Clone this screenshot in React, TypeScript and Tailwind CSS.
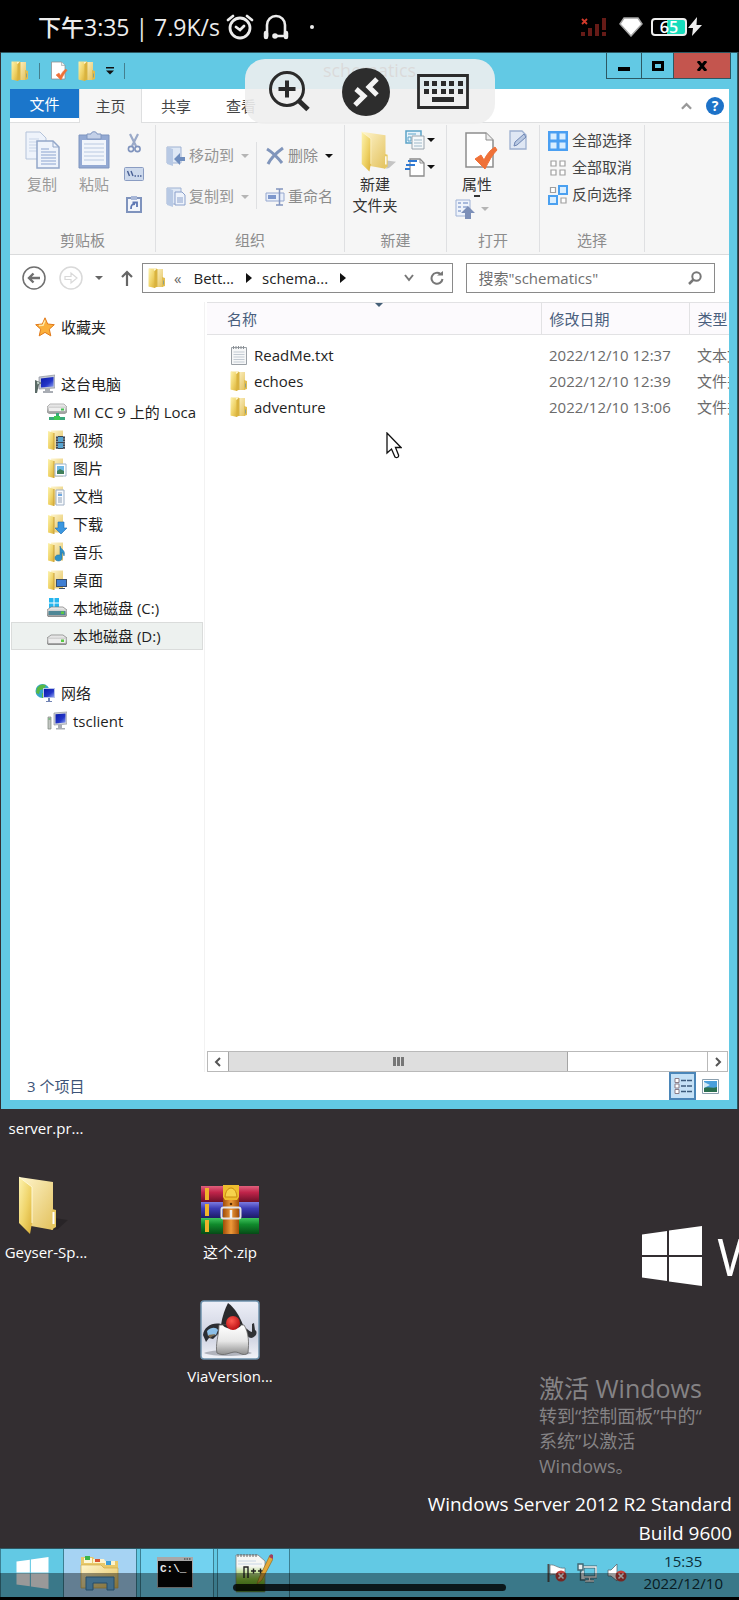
import React from "react";

type P = { className?: string };

/* Shared gradients for the coloured icons */
const Defs = () => (
  <svg className="absolute size-0" aria-hidden="true">
    <defs>
      <linearGradient id="fold" x1="0" y1="0" x2="1" y2="1">
        <stop offset="0" stopColor="#fdf3b0" />
        <stop offset="0.55" stopColor="#efd368" />
        <stop offset="1" stopColor="#d9ae36" />
      </linearGradient>
      <linearGradient id="foldSoft" x1="0" y1="0" x2="1" y2="1">
        <stop offset="0" stopColor="#fff6cf" />
        <stop offset="1" stopColor="#e3c25e" />
      </linearGradient>
      <linearGradient id="drive" x1="0" y1="0" x2="0" y2="1">
        <stop offset="0" stopColor="#f4f4f4" />
        <stop offset="1" stopColor="#9a9a9a" />
      </linearGradient>
      <linearGradient id="screen" x1="0" y1="0" x2="1" y2="1">
        <stop offset="0" stopColor="#0a1aa8" />
        <stop offset="0.6" stopColor="#2436c8" />
        <stop offset="1" stopColor="#8ea2f2" />
      </linearGradient>
      <linearGradient id="bookR" x1="0" y1="0" x2="0" y2="1">
        <stop offset="0" stopColor="#e0607c" />
        <stop offset="0.4" stopColor="#c0244a" />
        <stop offset="1" stopColor="#6c0f28" />
      </linearGradient>
      <linearGradient id="bookB" x1="0" y1="0" x2="0" y2="1">
        <stop offset="0" stopColor="#7c7be0" />
        <stop offset="0.4" stopColor="#3c3cb4" />
        <stop offset="1" stopColor="#1d1c66" />
      </linearGradient>
      <linearGradient id="bookG" x1="0" y1="0" x2="0" y2="1">
        <stop offset="0" stopColor="#3fc45c" />
        <stop offset="0.4" stopColor="#108a2c" />
        <stop offset="1" stopColor="#064a16" />
      </linearGradient>
      <linearGradient id="strap" x1="0" y1="0" x2="1" y2="0">
        <stop offset="0" stopColor="#a04c08" />
        <stop offset="0.5" stopColor="#ee9a3a" />
        <stop offset="1" stopColor="#a04c08" />
      </linearGradient>
      <radialGradient id="nose" cx="0.4" cy="0.35" r="0.7">
        <stop offset="0" stopColor="#ff5a50" />
        <stop offset="1" stopColor="#b80c10" />
      </radialGradient>
      <linearGradient id="belly" x1="0" y1="0" x2="0" y2="1">
        <stop offset="0" stopColor="#ffffff" />
        <stop offset="0.55" stopColor="#e6e6e6" />
        <stop offset="1" stopColor="#8e8e8e" />
      </linearGradient>
      <linearGradient id="card" x1="0" y1="0" x2="0" y2="1">
        <stop offset="0" stopColor="#eef0f8" />
        <stop offset="0.6" stopColor="#cdd1e0" />
        <stop offset="1" stopColor="#f3f4f9" />
      </linearGradient>
      <linearGradient id="npp" x1="0" y1="0" x2="0" y2="1">
        <stop offset="0.3" stopColor="#f7f7f4" />
        <stop offset="0.65" stopColor="#8cc63c" />
        <stop offset="1" stopColor="#3f8a10" />
      </linearGradient>
    </defs>
  </svg>
);

const Folder = ({ className = "" }: P) => (
  <svg viewBox="0 0 18 20" className={`shrink-0 ${className}`} aria-hidden="true">
    <path d="M1 .5h8v18H1z" fill="#f5e08a" />
    <path d="M6 1h9v18H6z" fill="url(#foldSoft)" />
    <path d="M9 1v18" stroke="#d8b548" />
    <path d="M.5.5 7 3v17L.5 18.500z" fill="url(#fold)" />
    <path d="M6.500 3 9 .8v18L6.500 20z" fill="#d9b33f" />
    <path d="M14 9l3 1v8l-3 1z" fill="#e2bd4e" />
    <path d="M15.500 12.500v4" stroke="#8fa08a" />
  </svg>
);

const BigFolder = ({ className = "" }: P) => (
  <svg viewBox="0 0 40 60" className={`shrink-0 overflow-visible ${className}`} aria-hidden="true">
    <path d="M37 42 50 44 40 53 36 54z" fill="#000" opacity="0.2" />
    <path d="M1 1 35 6v48L13 50z" fill="url(#foldSoft)" />
    <path d="M1 1 14 11v36L12 58 1 47z" fill="url(#fold)" />
    <path d="M1 1 14 11v36" fill="none" stroke="#fff8d4" />
    <path d="M34 33l4 1v17l-5 3z" fill="#e6c862" />
    <path d="M35.500 36v12" stroke="#fff" strokeWidth="2" />
  </svg>
);

const PageCheck = ({ className = "" }: P) => (
  <svg viewBox="0 0 34 40" className={`shrink-0 ${className}`} aria-hidden="true">
    <path d="M2 2h20l7 7v27H2z" fill="#fff" stroke="#8d8d8d" strokeWidth="1.500" />
    <path d="M22 2v7h7" fill="#eee" stroke="#8d8d8d" />
    <path d="M11 28l6-4 3 5c3-6 6-10 11-13l2 3c-5 5-8 11-12 19z" fill="#ef7138" stroke="#ef7138" />
  </svg>
);

const Caret = ({ className = "" }: P) => (
  <svg viewBox="0 0 8 4" className={`h-1 w-2 shrink-0 ${className}`} aria-hidden="true">
    <path d="M0 0h8L4 4z" fill="currentColor" />
  </svg>
);

const Monitor = () => (
  <>
    <path d="M7 2l13 -1v12L7 14z" fill="#d3d6dc" stroke="#8f949c" strokeWidth="0.700" />
    <path d="M8.500 3.300l10-.8v9l-10 .9z" fill="url(#screen)" />
    <path d="M11 14h4v3h3v1.500H9V17h2z" fill="#a9adb4" />
  </>
);

const svgBox = "size-5 shrink-0";

const StarIcon = () => (
  <svg viewBox="0 0 20 20" className={svgBox} aria-hidden="true">
    <path d="M10 .8 12.700 7l6.600.7-5 4.500 1.500 6.700L10 15.400l-5.800 3.500 1.500-6.700-5-4.500L7.300 7z" fill="#fbb03b" stroke="#e07a1c" />
    <path d="M10 3.500 8 8.200 4 8.600" stroke="#ffe9a8" strokeWidth="1.500" fill="none" />
  </svg>
);
const PcIcon = () => (
  <svg viewBox="0 0 20 20" className={svgBox} aria-hidden="true">
    <path d="M4 3l16-2v13L4 15z" fill="#c3c8d4" stroke="#8f949c" strokeWidth="0.700" />
    <path d="M6 4.500 18.500 3v9.500L6 13.500z" fill="url(#screen)" />
    <path d="M10 14h5v3h3v2H8v-2h2z" fill="#a9adb4" />
    <path d="M0 6 7 9l-3 1.500L2 19H0z" fill="#5a6a66" />
    <path d="M2 7.500 5 9 2.500 10.500z" fill="#d6e4dc" />
  </svg>
);
const ClientIcon = () => (
  <svg viewBox="0 0 20 20" className={svgBox} aria-hidden="true">
    <Monitor />
    <path d="M1 6h3v12H1z" fill="#c2c6c2" stroke="#7d857d" strokeWidth="0.700" />
    <path d="M1.500 8h2" stroke="#3fae49" />
  </svg>
);
const GlobeIcon = () => (
  <svg viewBox="0 0 20 20" className={svgBox} aria-hidden="true">
    <circle cx="7.500" cy="8" r="7" fill="#35a5c9" />
    <path d="M2 5c3-4 6-4 9-3l-2 4-4 1-1 4-3-1zM7 10l4 1-2 4H7z" fill="#58b843" />
    <path d="M8 5h12v10H8z" fill="#b9c4e8" />
    <path d="M9 6h10v8H9z" fill="url(#screen)" />
    <path d="M13 15h2v3h2v1h-6v-1h2z" fill="#7284b4" />
  </svg>
);
const NetDriveIcon = () => (
  <svg viewBox="0 0 20 20" className={svgBox} aria-hidden="true">
    <path d="M3 2h14l3 3v5l-2 1.500H2L0 10V5z" fill="url(#drive)" stroke="#888" strokeWidth="0.600" />
    <path d="M2 6h16v3H2z" fill="#eee" />
    <path d="M14 6.500h3v2h-3z" fill="#41c04d" />
    <path d="M9 11h3v4h6v3H2v-3h7z" fill="#3aa87a" />
    <path d="M7 14h6v4H7z" fill="#3dca52" />
  </svg>
);
const DriveIcon = ({ win = false }: { win?: boolean }) => (
  <svg viewBox="0 0 20 20" className={svgBox} aria-hidden="true">
    {win && <path d="M2 0h4.500v4.500H2zM7.500 0H12v4.500H7.500zM2 5.500h4.500V10H2zM7.500 5.500H12V10H7.500z" fill="#25b5ee" />}
    <path d="M4 9h12l4 3v5l-1 1.500H1L0 17v-5z" fill="url(#drive)" stroke="#777" strokeWidth="0.700" />
    <path d="M1.500 13h17v4h-17z" fill={win ? "#4f8796" : "#ececec"} />
    <path d="M14 13.500h3v2.500h-3z" fill="#59c843" />
  </svg>
);
const LibIcon = ({ kind }: { kind: string }) => (
  <svg viewBox="0 0 20 20" className={svgBox} aria-hidden="true">
    <path d="M4 .5h12v18H4z" fill="url(#foldSoft)" />
    <path d="M1 1 7 3v17l-6-1.500z" fill="url(#fold)" />
    <path d="M7 3v17" stroke="#c9a03a" />
    {kind === "video" && (
      <>
        <path d="M9 6h9v13H9z" fill="#3c4654" />
        <path d="M11 7h5v5h-5zM11 13h5v5h-5z" fill="#57a3cf" />
        <path d="M10 6v13M17 6v13" stroke="#e8e8e8" strokeDasharray="1 1.500" />
      </>
    )}
    {kind === "picture" && (
      <>
        <path d="M8 6h11v12H8z" fill="#fff" stroke="#9db4cc" />
        <path d="M10 8h7v8h-7z" fill="#6db7e4" />
        <path d="M10 13l3-2 4 2v3h-7z" fill="#3f7f5a" />
      </>
    )}
    {kind === "doc" && (
      <>
        <path d="M9 4h8v15H9z" fill="#f7fafd" stroke="#a0b0c4" />
        <path d="M11 7h4M11 12h4M11 14h4M11 16h4" stroke="#8f9fb4" />
        <path d="M11 8h4v2h-4z" fill="#6fa8e0" />
      </>
    )}
    {kind === "down" && <path d="M11 8h6v6h3l-6 6-6-6h3z" fill="#3a97e0" stroke="#1f6cb4" strokeWidth="0.600" />}
    {kind === "music" && (
      <path d="M13 4c1 4 6 4 4 10-1-3-2-4-2-4v6c0 4-7 4-7 0s5-3 5-3z" fill="#2f93c8" stroke="#1c6a9c" strokeWidth="0.500" />
    )}
    {kind === "desk" && (
      <>
        <path d="M9 9h11v8H9z" fill="#3b4f6d" />
        <path d="M10 10h9v6h-9z" fill="#3f7fd4" />
        <path d="M12 18h6v1h-6z" fill="#3b4f6d" />
      </>
    )}
  </svg>
);
const TextFileIcon = () => (
  <svg viewBox="0 0 18 20" className="h-5 w-[18px] shrink-0" aria-hidden="true">
    <path d="M1.500 2.500h15v17h-15z" fill="#f6f7f8" stroke="#9aa0a6" />
    <path d="M3.500 1v3M6 1v3M8.500 1v3M11 1v3M13.500 1v3" stroke="#8a8f94" />
    <path d="M3.500 7h11M3.500 9.500h11M3.500 12h11M3.500 14.500h11M3.500 17h11" stroke="#c3cbd3" />
  </svg>
);

const WinFlag = ({ className = "" }: P) => (
  <svg viewBox="0 0 60 60" className={`shrink-0 ${className}`} aria-hidden="true">
    <path d="M0 8.500 25 5v24H0zM27 4.600 60 0v29H27zM0 31h25v24L0 51.500zM27 31h33v29l-33-4.600z" fill="#fff" />
  </svg>
);

function StatusBar() {
  return (
    <header className="flex h-[52px] items-center bg-black pt-0.5 pr-[37px] pl-[38px] text-[#ececec]">
      <span className="text-[23px] leading-[30px] font-medium whitespace-nowrap">下午3:35 | 7.9K/s</span>
      <svg viewBox="0 0 28 26" className="ml-1.5 h-[26px] w-7" fill="none" stroke="currentColor" strokeWidth="2.800" strokeLinecap="round" aria-hidden="true">
        <circle cx="14" cy="14" r="10" />
        <path d="M2 6 7 2M26 6l-5-4M10 13l4 3 4-4" />
      </svg>
      <svg viewBox="0 0 28 26" className="ml-2 h-[26px] w-7" fill="none" stroke="currentColor" strokeWidth="2.600" strokeLinecap="round" aria-hidden="true">
        <path d="M5 22V11a9 9 0 0 1 18 0v11M14 22h10" />
        <path d="M4 19v4M24 19v4" strokeWidth="4.500" />
        <circle cx="13" cy="22" r="1.500" fill="currentColor" />
      </svg>
      <span className="ml-5 size-1 rounded-full bg-[#ececec]" />
      <div className="ml-auto flex items-center">
        <svg viewBox="0 0 27 20" className="h-5 w-[27px]" aria-hidden="true">
          <path d="M1 15h4v4H1zM8 11h4v8H8zM15 7h4v12h-4zM22 1h4v12h-4zM22 15h4v4h-4z" fill="#661b17" />
          <path d="M2 2l5 5M7 2 2 7" stroke="#d23a2b" strokeWidth="1.800" />
        </svg>
        <svg viewBox="0 0 24 20" className="ml-3 h-5 w-6" aria-hidden="true">
          <path d="M5 1h14l4 6-11 12L1 7z" fill="#fff" stroke="#a5a5a5" strokeWidth="1.500" />
        </svg>
        <div className="ml-2 flex h-[18px] w-9 items-center justify-center rounded border-2 border-[#eee] bg-[linear-gradient(90deg,#000_45%,#17dcbc_45%)] text-base leading-4 font-semibold text-white">
          65
        </div>
        <svg viewBox="0 0 14 20" className="ml-px h-5 w-3.5" aria-hidden="true">
          <path d="M9 0 0 11h5l-1 8 10-11H8.500z" fill="#eee" />
        </svg>
      </div>
    </header>
  );
}

function RemoteToolbar() {
  return (
    <div className="absolute top-[59px] left-1/2 z-10 flex h-[65px] w-[250px] -translate-x-1/2 items-center justify-between rounded-[20px] bg-[#eeeeee]/90 pr-[26px] pl-6">
      <button aria-label="放大">
        <svg viewBox="0 0 46 42" className="h-[42px] w-[46px]" fill="none" stroke="#2b2b2b" aria-hidden="true">
          <circle cx="18" cy="18" r="16.500" strokeWidth="3" />
          <path d="M9.500 18h17M18 9.500v17" strokeWidth="4" />
          <path d="M29 29l10 9.500" strokeWidth="5" />
        </svg>
      </button>
      <button aria-label="远程桌面">
        <svg viewBox="0 0 48 48" className="size-12" fill="none" aria-hidden="true">
          <circle cx="24" cy="24" r="24" fill="#2d2d2d" />
          <path d="M14 21l8 7-9 9M35 11l-8 8 8 8" stroke="#f4f4f4" strokeWidth="5" />
        </svg>
      </button>
      <button aria-label="键盘">
        <svg viewBox="0 0 52 35" className="h-[35px] w-[52px]" aria-hidden="true">
          <path d="M1.500 1.500h49v32h-49z" fill="none" stroke="#2b2b2b" strokeWidth="2.800" />
          <path d="M7 7h5v5H7zM15 7h5v5h-5zM24 7h5v5h-5zM32 7h5v5h-5zM41 7h5v5h-5zM7 15h5v5H7zM15 15h5v5h-5zM24 15h5v5h-5zM32 15h5v5h-5zM41 15h5v5h-5zM15 23h22v5H15z" fill="#2b2b2b" />
        </svg>
      </button>
    </div>
  );
}

function TitleBar() {
  return (
    <div className="relative flex h-9 items-start">
      <div className="flex h-9 items-center gap-2.5 pl-px">
        <Folder className="h-5 w-[18px]" />
        <span className="h-4 w-px bg-[#44808f]" />
        <PageCheck className="h-5 w-[18px]" />
        <Folder className="h-5 w-[18px]" />
        <svg viewBox="0 0 8 8" className="size-2" aria-hidden="true">
          <path d="M0 0h8v1.500H0zM0 3.500h8L4 7.500z" fill="#111" />
        </svg>
        <span className="h-4 w-px bg-[#44808f]" />
      </div>
      <h1 className="absolute top-1 left-1/2 -translate-x-1/2 text-lg leading-[26px] text-[#222]">schematics</h1>
      <div className="ml-auto -mr-0.5 flex h-[26px] divide-x divide-[#2c5863] border border-t-0 border-[#2c5863]">
        <button className="flex w-[35px] items-center justify-center" aria-label="最小化">
          <span className="mt-1.5 h-1 w-3 bg-black" />
        </button>
        <button className="flex w-8 items-center justify-center" aria-label="最大化">
          <span className="h-2.5 w-3 border-[3px] border-black" />
        </button>
        <button className="flex w-14 items-center justify-center bg-[#c4554e]" aria-label="关闭">
          <svg viewBox="0 0 12 10" className="h-2.5 w-3" aria-hidden="true">
            <path d="M2 0l8 10M10 0 2 10" stroke="#000" strokeWidth="3" />
          </svg>
        </button>
      </div>
    </div>
  );
}

function Tabs() {
  return (
    <nav className="flex h-[34px] border-b border-[#dedfe0] bg-white text-[#444]">
      <button className="h-[29px] w-[69px] bg-[#1b76cb] text-white">文件</button>
      <button className="-mb-px h-[34px] w-[63px] border-x border-[#dedfe0] bg-[#f6f6f6]">主页</button>
      <button className="w-[68px]">共享</button>
      <button className="w-[62px]">查看</button>
      <div className="ml-auto flex items-center gap-3.5 pr-[5px]">
        <svg viewBox="0 0 12 8" className="h-2 w-[11px]" aria-hidden="true">
          <path d="M1 7l5-5 5 5" fill="none" stroke="#999" strokeWidth="2.500" />
        </svg>
        <button className="flex size-[18px] items-center justify-center rounded-full bg-[#1d72c8] text-sm leading-none font-bold text-white" aria-label="帮助">
          ?
        </button>
      </div>
    </nav>
  );
}

const Group = ({ label, width, children }: { label: string; width: string; children: React.ReactNode }) => (
  <section className={`flex shrink-0 flex-col border-r border-[#dfe0e2] ${width}`}>
    <div className="flex flex-1">{children}</div>
    <div className="h-[22px] text-center leading-5 text-[#8c8c8c]">{label}</div>
  </section>
);

function Ribbon() {
  return (
    <div className="flex h-[132px] overflow-hidden border-b border-[#dadbdc] bg-[#f6f6f6] py-0.5 leading-[21px]">
      <Group label="剪贴板" width="w-[146px]">
        <button className="ml-3.5 flex w-9 flex-col items-center gap-[5px] pt-1.5 text-[#9a9a9a]">
          <svg viewBox="0 0 35 38" className="h-[38px] w-[35px]" aria-hidden="true">
            <path d="M1 1h14l6 6v21H1z" fill="#eef3fb" stroke="#b4c3da" />
            <path d="M4 8h10M4 11h14M4 14h14M4 17h14M4 20h14" stroke="#c9d5e8" />
            <path d="M12 10h16l6 6v21H12z" fill="#eef3fb" stroke="#93a7c9" strokeWidth="1.500" />
            <path d="M28 10v6h6" fill="none" stroke="#93a7c9" />
            <path d="M16 18h8M16 21h15M16 24h15M16 27h15M16 30h15M16 33h15" stroke="#8ba3cf" />
          </svg>
          <span className="whitespace-nowrap">复制</span>
        </button>
        <button className="ml-4 flex w-9 flex-col items-center gap-[5px] pt-1.5 text-[#9a9a9a]">
          <svg viewBox="0 0 32 38" className="h-[38px] w-8" aria-hidden="true">
            <path d="M1 4h30v33H1z" fill="#93a9d3" stroke="#7f95bf" />
            <path d="M4 9h24v25H4z" fill="#f1f5fb" />
            <path d="M6 13h20M6 17h20M6 21h20M6 25h20M6 29h20" stroke="#cbd8ea" strokeWidth="1.500" />
            <path d="M9 3h4c0-3 6-3 6 0h4v5H9z" fill="#c3d0e8" stroke="#7f95bf" />
          </svg>
          <span className="whitespace-nowrap">粘贴</span>
        </button>
        <div className="ml-3 flex w-5 flex-col items-center gap-3.5 pt-2">
          <svg viewBox="0 0 14 20" className="h-5 w-3.5" fill="none" aria-hidden="true">
            <path d="M3 1l6 12M11 1 5 13" stroke="#9aa9c8" strokeWidth="2.200" />
            <circle cx="4" cy="16" r="2.600" stroke="#7f93bd" strokeWidth="1.600" />
            <circle cx="10.500" cy="16" r="2.600" stroke="#7f93bd" strokeWidth="1.600" />
          </svg>
          <svg viewBox="0 0 20 14" className="h-3.5 w-5" aria-hidden="true">
            <rect x="0.500" y="0.500" width="19" height="13" rx="1" fill="#cdd9ec" stroke="#8a9cc2" />
            <path d="M3.500 4l2 5M7 4l2 5" stroke="#485f94" strokeWidth="1.400" />
            <path d="M10.500 9h1.500M13.500 9H15M16 9h1.500" stroke="#485f94" strokeWidth="1.500" />
          </svg>
          <svg viewBox="0 0 16 18" className="h-[18px] w-4" aria-hidden="true">
            <path d="M1 3h14v14H1z" fill="#f2f5fb" stroke="#7f93bd" strokeWidth="2" />
            <path d="M5 1h6v4H5z" fill="#a9b8d8" />
            <path d="M5 14c0-4 1-5 4-5M6.500 7.500H11V12" fill="none" stroke="#5d77b4" strokeWidth="1.800" />
          </svg>
        </div>
      </Group>

      <Group label="组织" width="w-[189px]">
        <div className="ml-2.5 flex w-[90px] flex-col gap-5 pt-5 text-[#959595]">
          <button className="flex items-center gap-[3px]">
            <svg viewBox="0 0 20 20" className="size-5" aria-hidden="true">
              <path d="M1 1h14v16H1z" fill="#dfe8f5" stroke="#9eb1d2" />
              <path d="M1 1l6 2v17l-6-2z" fill="#b8c9e4" />
              <path d="M19 11h-5V7l-6 6 6 6v-4h5z" fill="#6f8dbd" />
            </svg>
            <span className="whitespace-nowrap">移动到</span>
            <Caret className="ml-1 text-[#b5b5b5]" />
          </button>
          <button className="flex items-center gap-[3px]">
            <svg viewBox="0 0 20 20" className="size-5" aria-hidden="true">
              <path d="M1 1h14v16H1z" fill="#dfe8f5" stroke="#9eb1d2" />
              <path d="M1 1l6 2v17l-6-2z" fill="#b8c9e4" />
              <path d="M9 5h7l3 3v10H9z" fill="#eef3fb" stroke="#8aa0cb" />
              <path d="M11 11h6M11 13h6M11 15h6" stroke="#8aa0cb" />
            </svg>
            <span className="whitespace-nowrap">复制到</span>
            <Caret className="ml-1 text-[#b5b5b5]" />
          </button>
        </div>
        <span className="mt-[17px] h-[67px] w-px bg-[#dfe0e2]" />
        <div className="ml-2 flex flex-col gap-5 pt-5 text-[#8c8c8c]">
          <button className="flex items-center gap-[3px]">
            <svg viewBox="0 0 20 20" className="size-5" fill="none" aria-hidden="true">
              <path d="M2 3c5 3 11 9 15 14M18 2C11 7 6 12 3 18" stroke="#8095bb" strokeWidth="3" />
            </svg>
            <span className="whitespace-nowrap">删除</span>
            <Caret className="ml-1 text-[#111]" />
          </button>
          <button className="flex items-center gap-[3px]">
            <svg viewBox="0 0 20 20" className="size-5" aria-hidden="true">
              <path d="M1 6h18v8H1z" fill="#e9effa" stroke="#96a8cf" />
              <path d="M3 8h8v4H3z" fill="#7d97cc" />
              <path d="M11 2h7M14.500 2v16M11 18h7" stroke="#8295bf" strokeWidth="1.500" />
            </svg>
            <span className="whitespace-nowrap">重命名</span>
          </button>
        </div>
      </Group>

      <Group label="新建" width="w-[102px]">
        <button className="ml-[7px] flex w-[46px] flex-col items-center pt-1.5 text-[#333]">
          <BigFolder className="h-[42px] w-7" />
          <span className="mt-px whitespace-nowrap">新建</span>
          <span className="whitespace-nowrap">文件夹</span>
        </button>
        <div className="ml-[7px] flex flex-col gap-[7px] pt-[5px] text-[#111]">
          <button className="flex items-center gap-0.5" aria-label="新建项目">
            <svg viewBox="0 0 20 20" className="size-5" aria-hidden="true">
              <path d="M1 1h15v12H1z" fill="#e8f3fb" stroke="#5ca4c8" strokeWidth="1.500" />
              <path d="M3 4h8M3 7h3v4H3z" stroke="#5ca4c8" fill="none" />
              <path d="M7 6h12v13H7z" fill="#f5f8fa" stroke="#9aa4ad" />
              <path d="M9 10h8M9 13h8M9 16h8" stroke="#9fb9c9" />
            </svg>
            <Caret />
          </button>
          <button className="flex items-center gap-0.5" aria-label="轻松访问">
            <svg viewBox="0 0 20 20" className="size-5" aria-hidden="true">
              <path d="M5 2h10l4 4v13H5z" fill="#fff" stroke="#8b8b8b" strokeWidth="1.300" />
              <path d="M15 2v4h4" fill="none" stroke="#8b8b8b" />
              <path d="M3 4h9M1 8h9M0 12h5" stroke="#2e78d2" strokeWidth="1.800" />
            </svg>
            <Caret />
          </button>
        </div>
      </Group>

      <Group label="打开" width="w-[93px]">
        <div className="ml-2 flex w-11 flex-col items-center pt-1.5 text-[#333]">
          <button className="flex flex-col items-center">
            <PageCheck className="ml-2 h-10 w-[34px]" />
            <span className="mt-[3px] whitespace-nowrap">属性</span>
            <span className="h-0.5 w-1.5 bg-[#333]" />
          </button>
          <button className="mt-0.5 flex items-center gap-1.5 self-start text-[#b5b5b5]" aria-label="打开">
            <svg viewBox="0 0 20 20" className="size-5" aria-hidden="true">
              <path d="M1 1h14v16H1z" fill="#eef3fb" stroke="#9fb2d6" />
              <path d="M3 4h3M3 8h3M3 12h3M8 4h5M8 8h5" stroke="#90a6d2" strokeWidth="1.500" />
              <path d="M13 7l7 7h-4v6h-6v-6H6z" fill="#7c8fb8" />
            </svg>
            <Caret />
          </button>
        </div>
        <svg viewBox="0 0 18 20" className="mt-[5px] ml-2.5 h-5 w-[18px]" aria-hidden="true">
          <path d="M1 1h12l4 4v14H1z" fill="#dfe7f4" stroke="#9db0d0" strokeWidth="1.300" />
          <path d="M5 16l1-4 9-8 2 3-9 8z" fill="#b8c8e2" stroke="#6f86b4" />
        </svg>
      </Group>

      <Group label="选择" width="w-[105px]">
        <div className="ml-2 flex flex-col gap-1.5 pt-[5px] text-[#444]">
          <button className="flex items-center gap-1">
            <svg viewBox="0 0 20 20" className="size-5" aria-hidden="true">
              <path d="M0 0h20v20H0z" fill="#4a9ff2" />
              <path d="M2.500 2.500h6v6h-6zM11.500 2.500h6v6h-6zM2.500 11.500h6v6h-6zM11.500 11.500h6v6h-6z" fill="#d9eeff" />
            </svg>
            <span className="whitespace-nowrap">全部选择</span>
          </button>
          <button className="flex items-center gap-1">
            <svg viewBox="0 0 20 20" className="size-5" aria-hidden="true">
              <path d="M3 3h5v5H3zM12 3h5v5h-5zM3 12h5v5H3zM12 12h5v5h-5z" fill="#fff" stroke="#a0a0a0" strokeWidth="1.200" />
            </svg>
            <span className="whitespace-nowrap">全部取消</span>
          </button>
          <button className="flex items-center gap-1">
            <svg viewBox="0 0 20 20" className="size-5" aria-hidden="true">
              <path d="M10 0h10v10H10zM0 10h10v10H0z" fill="#4aa0f0" />
              <path d="M12 2h6v6h-6zM2 12h6v6H2z" fill="#d9eeff" />
              <path d="M2.500 2.500h5v5h-5zM13 13h5v5h-5z" fill="#fff" stroke="#a0a0a0" strokeWidth="1.200" />
            </svg>
            <span className="whitespace-nowrap">反向选择</span>
          </button>
        </div>
      </Group>
    </div>
  );
}

function AddressBar() {
  return (
    <div className="flex h-[47px] items-center bg-white pr-3.5 pb-0.5 pl-3 text-[#222]">
      <button aria-label="后退">
        <svg viewBox="0 0 24 24" className="size-6" fill="none" stroke="#6f6f6f" aria-hidden="true">
          <circle cx="12" cy="12" r="11" strokeWidth="1.500" />
          <path d="M18 12H7M11.500 7.500 7 12l4.500 4.500" strokeWidth="2.400" />
        </svg>
      </button>
      <button className="ml-[13px]" aria-label="前进">
        <svg viewBox="0 0 24 24" className="size-6" fill="none" stroke="#d9d9d9" aria-hidden="true">
          <circle cx="12" cy="12" r="11" strokeWidth="1.500" />
          <path d="M6 10.500h6V7l6 5-6 5v-3.500H6z" strokeWidth="1.200" />
        </svg>
      </button>
      <Caret className="ml-3 text-[#666]" />
      <button className="ml-[18px]" aria-label="上移">
        <svg viewBox="0 0 12 16" className="h-4 w-3" fill="none" stroke="#666" strokeWidth="2.200" aria-hidden="true">
          <path d="M6 16V2M1 7l5-5 5 5" />
        </svg>
      </button>
      <div className="ml-[9px] flex h-[30px] min-w-0 flex-1 items-center border border-[#8a8a8a] pr-2 pl-[5px] whitespace-nowrap">
        <Folder className="h-5 w-[18px]" />
        <span className="ml-2 text-[#666]">«</span>
        <a href="#bett" className="ml-3">Bett...</a>
        <svg viewBox="0 0 6 10" className="ml-3 h-2.5 w-1.5" aria-hidden="true"><path d="M0 0l6 5-6 5z" fill="#111" /></svg>
        <a href="#schematics" className="ml-2.5">schema...</a>
        <svg viewBox="0 0 6 10" className="ml-3 h-2.5 w-1.5" aria-hidden="true"><path d="M0 0l6 5-6 5z" fill="#111" /></svg>
        <svg viewBox="0 0 10 8" className="ml-auto h-2 w-2.5" fill="none" stroke="#777" strokeWidth="2" aria-hidden="true"><path d="M1 1l4 5 4-5" /></svg>
        <svg viewBox="0 0 14 14" className="ml-4 size-3.5" aria-hidden="true">
          <path d="M10.500 3A5.500 5.500 0 1 0 12.500 8" fill="none" stroke="#777" strokeWidth="2" />
          <path d="M7 4.500h6V0z" fill="#777" />
        </svg>
      </div>
      <label className="ml-[13px] flex h-[30px] w-[36%] items-center border border-[#8a8a8a] px-3">
        <input aria-label="搜索" placeholder={'搜索"schematics"'} className="w-full min-w-0 bg-transparent outline-none placeholder:text-[#6f6f6f]" />
        <svg viewBox="0 0 14 14" className="size-3.5 shrink-0" fill="none" stroke="#777" strokeWidth="2" aria-hidden="true">
          <circle cx="8.500" cy="5.500" r="4.200" />
          <path d="M5.500 8.500 1 13" strokeWidth="2.500" />
        </svg>
      </label>
    </div>
  );
}

const drives: { icon: React.ReactNode; label: string; active?: boolean }[] = [
  { icon: <NetDriveIcon />, label: "MI CC 9 上的 Loca" },
  { icon: <LibIcon kind="video" />, label: "视频" },
  { icon: <LibIcon kind="picture" />, label: "图片" },
  { icon: <LibIcon kind="doc" />, label: "文档" },
  { icon: <LibIcon kind="down" />, label: "下载" },
  { icon: <LibIcon kind="music" />, label: "音乐" },
  { icon: <LibIcon kind="desk" />, label: "桌面" },
  { icon: <DriveIcon win />, label: "本地磁盘 (C:)" },
  { icon: <DriveIcon />, label: "本地磁盘 (D:)", active: true },
];

const NavRow = ({ icon, label, child, active }: { icon: React.ReactNode; label: string; child?: boolean; active?: boolean }) => (
  <a
    href="#nav"
    className={`flex h-7 items-center gap-1.5 overflow-hidden border whitespace-nowrap ${child ? "pl-[35px]" : "pl-[23px]"} ${active ? "border-[#dadcdb] bg-[#edf1ef]" : "border-transparent"}`}
  >
    {icon}
    <span>{label}</span>
  </a>
);

function NavPane() {
  return (
    <aside className="flex w-[195px] shrink-0 flex-col gap-[29px] border-r border-[#f2f2f2] pt-[11px] pr-px pl-px text-[#1f1f1f]">
      <div>
        <NavRow icon={<StarIcon />} label="收藏夹" />
      </div>
      <div>
        <NavRow icon={<PcIcon />} label="这台电脑" />
        {drives.map((d) => (
          <NavRow key={d.label} child {...d} />
        ))}
      </div>
      <div>
        <NavRow icon={<GlobeIcon />} label="网络" />
        <NavRow icon={<ClientIcon />} label="tsclient" child />
      </div>
    </aside>
  );
}

const files = [
  { icon: <TextFileIcon />, name: "ReadMe.txt", date: "2022/12/10 12:37", type: "文本文档" },
  { icon: <Folder className="h-5 w-[18px]" />, name: "echoes", date: "2022/12/10 12:39", type: "文件夹" },
  { icon: <Folder className="h-5 w-[18px]" />, name: "adventure", date: "2022/12/10 13:06", type: "文件夹" },
];

function FilePane() {
  return (
    <main className="flex min-w-0 flex-1 flex-col pl-0.5">
      <div className="relative flex-1 overflow-hidden">
        <table className="w-[600px] table-fixed border-collapse text-left whitespace-nowrap">
          <colgroup>
            <col className="w-[334px]" />
            <col className="w-[148px]" />
            <col />
          </colgroup>
          <thead>
            <tr className="h-8 border-y border-[#e2e2e4] bg-[#fcfafd] text-[#4a5f7d]">
              <th className="relative border-r border-[#e2e2e4] pl-5 font-normal">
                名称
                <Caret className="absolute top-0 left-1/2 w-2.5 text-[#456078]" />
              </th>
              <th className="border-r border-[#e2e2e4] pl-2 font-normal">修改日期</th>
              <th className="pl-2 font-normal">类型</th>
            </tr>
          </thead>
          <tbody>
            <tr className="h-[7px]" aria-hidden="true" />
            {files.map((f) => (
              <tr key={f.name} className="h-[26px] text-[#6b6b6b]">
                <td className="pl-[23px] text-[#1f1f1f]">
                  <span className="flex items-center gap-1.5">
                    {f.icon}
                    {f.name}
                  </span>
                </td>
                <td className="pl-2">{f.date}</td>
                <td className="pl-2">{f.type}</td>
              </tr>
            ))}
          </tbody>
        </table>
        <svg viewBox="0 0 16 27" className="absolute top-[130px] left-[179px] h-[27px] w-4" aria-hidden="true">
          <path d="M1 1v20l4.500-4 3.500 8c2 1.500 4 0 3.500-2L9.500 15.500H15z" fill="#fff" stroke="#111" strokeWidth="1.300" />
        </svg>
      </div>
      <div className="mr-px flex h-[21px] border border-[#b9b9b9] bg-white">
        <button className="flex w-5 items-center justify-center" aria-label="向左滚动">
          <svg viewBox="0 0 8 10" className="h-2.5 w-2" fill="none" stroke="#555" strokeWidth="2" aria-hidden="true"><path d="M6 1 2 5l4 4" /></svg>
        </button>
        <div className="flex flex-1">
          <div className="flex w-[71%] items-center justify-center gap-px border-x border-[#a5a5a5] bg-[#dedede]">
            <span className="h-[9px] w-[3px] bg-[#777]" />
            <span className="h-[9px] w-[3px] bg-[#777]" />
            <span className="h-[9px] w-[3px] bg-[#777]" />
          </div>
        </div>
        <button className="flex w-5 items-center justify-center border-l border-[#b9b9b9]" aria-label="向右滚动">
          <svg viewBox="0 0 8 10" className="h-2.5 w-2" fill="none" stroke="#555" strokeWidth="2" aria-hidden="true"><path d="M2 1l4 4-4 4" /></svg>
        </button>
      </div>
    </main>
  );
}

function Explorer() {
  return (
    <div className="mx-px flex flex-1 flex-col border-t border-r border-[#2c5863] bg-[#62c9e4] pr-2 pb-[9px] pl-[9px]">
      <TitleBar />
      <Tabs />
      <Ribbon />
      <AddressBar />
      <div className="flex flex-1 bg-white">
        <NavPane />
        <FilePane />
      </div>
      <footer className="flex h-7 items-center bg-white pl-[17px] text-[#3d5478]">
        <span>3 个项目</span>
        <button className="ml-auto flex h-7 w-[27px] items-center justify-center border-2 border-[#4b86b8] bg-[#c5e1f6]" aria-label="详细信息">
          <svg viewBox="0 0 20 18" className="h-[18px] w-5" aria-hidden="true">
            <path d="M2 1.500h4v4H2zM2 7h4v4H2zM2 12.500h4v4H2z" fill="#fff" stroke="#8b7d86" />
            <path d="M8 3.500h5M14 3.500h5M8 9h5M14 9h5M8 14.500h5M14 14.500h5" stroke="#3c5b7c" strokeWidth="1.400" />
          </svg>
        </button>
        <button className="mr-2.5 ml-1.5" aria-label="缩略图">
          <svg viewBox="0 0 17 15" className="h-[15px] w-[17px]" aria-hidden="true">
            <path d="M.5.5h16v14H.5z" fill="#fff" stroke="#8a9fae" />
            <path d="M2 2h13v11H2z" fill="#4a9fdc" />
            <path d="M2 3l6 3-6 3z" fill="#cfe8f6" />
            <path d="M2 9c4-2 9 1 13-1v5H2z" fill="#2b7050" />
          </svg>
        </button>
      </footer>
    </div>
  );
}

const ZipIcon = () => (
  <svg viewBox="0 0 60 52" className="h-[52px] w-[60px]" aria-hidden="true">
    <path d="M1 2h58v16H1z" fill="url(#bookR)" />
    <path d="M1 18h58v16H1z" fill="url(#bookB)" />
    <path d="M1 34h58v16H1z" fill="url(#bookG)" />
    <path d="M5 4h4v12H5zM5 20h4v12H5zM5 36h4v12H5z" fill="#f0b42a" />
    <path d="M23 1h16v49H23z" fill="url(#strap)" />
    <path d="M23 1h16v12l-2 3H25l-2-3z" fill="#eebd2e" />
    <path d="M25 13c1-12 11-12 12 0z" fill="#f6d24c" stroke="#c98a10" />
    <circle cx="31" cy="20" r="1.300" fill="#5a2c04" />
    <rect x="21.500" y="23.500" width="19" height="11" rx="2" fill="none" stroke="#e4e4e4" strokeWidth="2" />
    <path d="M31 26v8" stroke="#f2f2f2" strokeWidth="2.500" />
  </svg>
);

const DukeIcon = () => (
  <svg viewBox="0 0 60 60" className="size-[60px]" aria-hidden="true">
    <rect x="1" y="1" width="58" height="58" rx="3" fill="url(#card)" stroke="#6f93ad" strokeWidth="1.500" />
    <path d="M4 53c8-4 40-4 48 0-8 4-40 4-48 0z" fill="#8a8d98" opacity="0.600" />
    <path d="M21 24C12 22 4 27 3 35l3 7 3-4 4 1 6-6z" fill="#2b2d33" />
    <path d="M7 31c4-4 9-4 11-1l-2 5-8 1z" fill="#8cbfe8" />
    <path d="M8 35l8-1-6 4z" fill="#7c6a4c" />
    <path d="M45 28c3 1 5 4 7 4v-8l2-1 1 7c2 1 2 4 0 6-4 4-8 1-9-3z" fill="#303135" />
    <path d="M28 3c7 5 12 14 15 22H21C22 17 25 9 28 3z" fill="#2a2a2c" />
    <path d="M19 25h25c5 8 5 18 4 28-5 4-8-1-13-1s-11 5-18 1c-2-8 2-18 2-28z" fill="url(#belly)" stroke="#666" strokeWidth="0.800" />
    <path d="M23 25c2 5 17 5 18 0z" fill="#2a2a2c" />
    <circle cx="33" cy="23" r="7" fill="url(#nose)" />
  </svg>
);

const DesktopItem = ({ icon, label, place }: { icon?: React.ReactNode; label: string; place: string }) => (
  <a href="#item" className={`flex flex-col items-center justify-end whitespace-nowrap ${place}`}>
    {icon}
    <span className="mt-1 h-6 leading-6">{label}</span>
  </a>
);

function Desktop() {
  return (
    <div className="flex justify-between overflow-hidden bg-[#332e31] text-white">
      <div className="grid grid-cols-[92px_92px_92px] grid-rows-[31px_124px_124px]">
        <DesktopItem label="server.pr..." place="col-start-1 row-start-1" />
        <DesktopItem icon={<BigFolder className="mr-4 h-[60px] w-10" />} label="Geyser-Sp..." place="col-start-1 row-start-2" />
        <DesktopItem icon={<ZipIcon />} label="这个.zip" place="col-start-3 row-start-2" />
        <DesktopItem icon={<DukeIcon />} label="ViaVersion..." place="col-start-3 row-start-3" />
      </div>
      <div className="flex w-[320px] shrink-0 flex-col pt-[117px]">
        <div className="flex h-[60px] items-center gap-[15px] self-end overflow-hidden">
          <WinFlag className="size-[60px]" />
          <span className="w-[22px] text-[52px] leading-[60px]">W</span>
        </div>
        <div className="mt-[86px] ml-[120px] w-[184px] text-[#858385]">
          <p className="text-[25px] leading-8 whitespace-nowrap">激活 Windows</p>
          <p className="text-lg leading-[25px]">转到“控制面板”中的“<br />系统”以激活<br />Windows。</p>
        </div>
        <p className="mt-[11px] pr-[7px] text-right text-[19px] leading-[29px] whitespace-nowrap">
          Windows Server 2012 R2 Standard
          <br />
          Build 9600
        </p>
      </div>
    </div>
  );
}

const ErrorBadge = () => (
  <>
    <circle cx="14" cy="13" r="5.500" fill="#c4423c" />
    <path d="M11.500 10.500l5 5M16.500 10.500l-5 5" stroke="#fff" strokeWidth="1.600" />
  </>
);

function Taskbar() {
  return (
    <div className="relative flex h-[52px] border-t border-b-[3px] border-t-[#2c5863] border-b-black bg-[#62c9e4]">
      <button className="flex w-16 items-center justify-center border-x border-[#3c7f92]" aria-label="开始">
        <WinFlag className="h-8 w-[33px]" />
      </button>
      <button className="flex w-[73px] items-center justify-center border-r border-[#3c7f92] bg-[#a6d3f3]" aria-label="文件资源管理器">
        <svg viewBox="0 0 40 36" className="h-9 w-10" aria-hidden="true">
          <path d="M1 2h12l3 4h22v26H1z" fill="#e8c96a" />
          <path d="M4 3h8v5H4z" fill="#fdf7d8" />
          <path d="M5 1h5v4H5z" fill="#3bb54a" />
          <path d="M13 4h11l2 4H13z" fill="#fdf3cc" />
          <path d="M15 4h5v3h-5z" fill="#d9542f" />
          <path d="M25 6h10v4H25z" fill="#fdf3cc" />
          <path d="M26 6h5v4h-5z" fill="#3e9fd8" />
          <path d="M1 10h20l3 3h14v20H1z" fill="url(#foldSoft)" stroke="#d0ab46" strokeWidth="0.700" />
          <path d="M6 35V22h28v13h-7v-7H13v7z" fill="#6cb4e4" stroke="#3d7fb0" />
        </svg>
      </button>
      <button className="ml-[3px] flex w-[74px] items-center justify-center border-x border-[#3c7f92] bg-[#72d2f0] pr-1" aria-label="命令提示符">
        <svg viewBox="0 0 36 32" className="h-8 w-9" aria-hidden="true">
          <path d="M0 0h36v31H0z" fill="#a8a8a8" />
          <path d="M1 4h34v26H1z" fill="#050505" />
          <path d="M27 2h7" stroke="#555" strokeWidth="1.500" strokeDasharray="1.500 1" />
          <text x="3" y="15" fill="#e8e8e8" fontFamily="Liberation Mono" fontSize="11" fontWeight="bold">C:\_</text>
        </svg>
      </button>
      <button className="ml-[3px] flex w-[73px] items-center justify-center border-x border-[#3c7f92] bg-[#6bcdec]" aria-label="Notepad++">
        <svg viewBox="0 0 38 40" className="h-10 w-[38px]" aria-hidden="true">
          <path d="M1 2h22l7 6v31H1z" fill="url(#npp)" stroke="#777" strokeWidth="0.700" />
          <path d="M3 1v3M6 1v3M9 1v3M12 1v3M15 1v3M18 1v3M21 1v3" stroke="#666" />
          <path d="M3 8h18M3 11h24" stroke="#c9d6e6" />
          <path d="M9 25V14h4v11M16 18h5M18.500 15.500v5M23 18h5M25.500 15.500v5" fill="none" stroke="#222" strokeWidth="1.400" />
          <path d="M22 31l2-6L35 2l4 2-12 23z" fill="#e2a83a" stroke="#8d641a" strokeWidth="0.600" />
          <path d="M34 4l2-3 4 2-2 3z" fill="#a04060" />
        </svg>
      </button>
      <div className="ml-auto flex items-center gap-2.5">
        <svg viewBox="0 0 20 20" className="size-5" aria-hidden="true">
          <path d="M1.500 1v18" stroke="#4d4d4d" strokeWidth="2" />
          <path d="M3 2c5-1 8 4 15 3v8c-6 1-9-3-15-1z" fill="#fff" stroke="#5d6a70" strokeWidth="0.700" />
          <ErrorBadge />
        </svg>
        <svg viewBox="0 0 20 20" className="size-5" fill="none" aria-hidden="true">
          <path d="M6 4h13v10H6zM12.500 14v4M8 18h9" stroke="#3f6672" strokeWidth="3" />
          <path d="M6 4h13v10H6zM12.500 14v4M8 18h9" stroke="#f4f4f4" strokeWidth="1.500" />
          <path d="M1 1h5v6H1zM3.500 7v10h5" stroke="#3f6672" strokeWidth="1.400" fill="#e8eef0" />
        </svg>
        <svg viewBox="0 0 20 20" className="size-5" aria-hidden="true">
          <path d="M1 7h3l6-6v17l-6-5H1z" fill="#fff" stroke="#5d6a70" strokeWidth="0.800" />
          <ErrorBadge />
        </svg>
      </div>
      <time className="mr-4 ml-4 pt-px text-center leading-[22px] text-[#0d2f3a]">
        15:35
        <br />
        2022/12/10
      </time>
      <div className="absolute inset-x-0 bottom-0 flex h-6 justify-center bg-black/40 pt-[11px]">
        <span className="h-[7px] w-[37%] rounded-full bg-black/80" />
      </div>
    </div>
  );
}

export default function App() {
  return (
    <div className="relative flex min-h-screen flex-col overflow-hidden bg-[#332e31] font-['Open_Sans','Noto_Sans_CJK_SC',sans-serif] text-[15px] leading-5">
      <Defs />
      <StatusBar />
      <RemoteToolbar />
      <Explorer />
      <Desktop />
      <Taskbar />
    </div>
  );
}
